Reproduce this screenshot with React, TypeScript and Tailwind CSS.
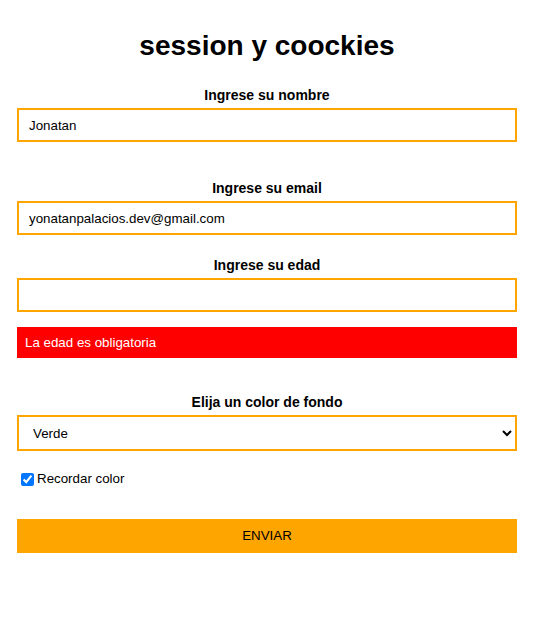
import React, { useState } from 'react';

const App = () => {
  const [nombre, setNombre] = useState('Jonatan');
  const [email, setEmail] = useState('yonatanpalacios.dev@gmail.com');
  const [edad, setEdad] = useState('');
  const [color, setColor] = useState('verde');
  const [recordar, setRecordar] = useState(true);

  const labelCls = 'block text-center text-[14px] leading-[16px] font-bold text-black';
  const inputCls =
    'block w-full h-[34px] border-2 border-[#ffa500] px-[10px] text-[13.33px] text-black bg-white outline-none';

  return (
    <div className="min-h-screen bg-white" style={{ fontFamily: '"Liberation Sans", Arial, sans-serif' }}>
      <form
        className="ml-[17px] w-[500px] pt-[30px] flex flex-col"
        onSubmit={(e) => e.preventDefault()}
      >
        <h1 className="text-center text-[28px] leading-[32px] font-bold text-black">session y coockies</h1>

        <label className={`${labelCls} mt-[25px]`} htmlFor="nombre">
          Ingrese su nombre
        </label>
        <input
          id="nombre"
          type="text"
          value={nombre}
          onChange={(e) => setNombre(e.target.value)}
          className={`${inputCls} mt-[5px]`}
        />

        <label className={`${labelCls} mt-[38px]`} htmlFor="email">
          Ingrese su email
        </label>
        <input
          id="email"
          type="email"
          value={email}
          onChange={(e) => setEmail(e.target.value)}
          className={`${inputCls} mt-[5px]`}
        />

        <label className={`${labelCls} mt-[22px]`} htmlFor="edad">
          Ingrese su edad
        </label>
        <input
          id="edad"
          type="text"
          value={edad}
          onChange={(e) => setEdad(e.target.value)}
          className={`${inputCls} mt-[5px]`}
        />

        <div className="mt-[15px] h-[31px] bg-[#ff0000] px-[8px] flex items-center text-[13.33px] text-white">
          La edad es obligatoria
        </div>

        <label className={`${labelCls} mt-[36px]`} htmlFor="color">
          Elija un color de fondo
        </label>
        <select
          id="color"
          value={color}
          onChange={(e) => setColor(e.target.value)}
          className="block w-full h-[36px] mt-[5px] border-2 border-[#ffa500] pl-[10px] pr-[2px] text-[13.33px] text-black bg-white outline-none"
        >
          <option value="verde">Verde</option>
          <option value="azul">Azul</option>
          <option value="rojo">Rojo</option>
        </select>

        <label className="mt-[20px] flex items-center h-[16px] text-[13.33px] text-black" htmlFor="recordar">
          <input
            id="recordar"
            type="checkbox"
            checked={recordar}
            onChange={(e) => setRecordar(e.target.checked)}
            className="ml-[4px] mr-[3px] w-[13px] h-[13px]"
          />
          Recordar color
        </label>

        <button
          type="submit"
          className="mt-[32px] h-[34px] w-full bg-[#ffa500] text-[13.33px] text-black"
        >
          ENVIAR
        </button>
      </form>
    </div>
  );
};

export default App;
